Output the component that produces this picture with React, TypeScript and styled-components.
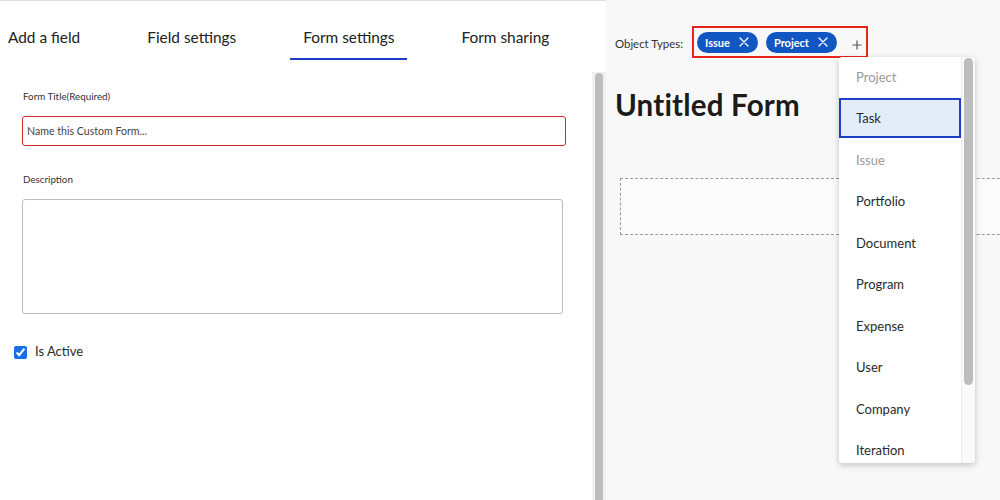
import * as React from "react";
import styled, { createGlobalStyle } from "styled-components";

const GlobalStyle = createGlobalStyle`
  html, body {
    margin: 0;
    padding: 0;
    background: #ffffff;
  }
  body {
    font-family: Lato, "Open Sans", Arial, sans-serif;
    color: #2a2a2a;
  }
  * {
    box-sizing: border-box;
  }
`;

const TABS = ["Add a field", "Field settings", "Form settings", "Form sharing"];

const OBJECT_TYPES = [
  { label: "Project", disabled: true },
  { label: "Task", selected: true },
  { label: "Issue", disabled: true },
  { label: "Portfolio" },
  { label: "Document" },
  { label: "Program" },
  { label: "Expense" },
  { label: "User" },
  { label: "Company" },
  { label: "Iteration" },
];

const CloseIcon = () => (
  <svg width="10" height="10" viewBox="0 0 10 10">
    <path
      d="M1 1 L9 9 M9 1 L1 9"
      stroke="#ffffff"
      strokeWidth="1.3"
      strokeLinecap="round"
    />
  </svg>
);

const PlusIcon = () => (
  <svg width="10" height="10" viewBox="0 0 10 10">
    <path d="M5 0.5 V9.5 M0.5 5 H9.5" stroke="#555" strokeWidth="1.2" />
  </svg>
);

export default function App() {
  return (
    <>
      <GlobalStyle />
      <Page>
        <LeftPanel>
          <TabBar>
            {TABS.map((t) => (
              <Tab key={t} active={t === "Form settings"}>
                {t}
              </Tab>
            ))}
          </TabBar>
          <Scroller>
            <FormBody>
              <Label>Form Title(Required)</Label>
              <TitleInput placeholder="Name this Custom Form..." />
              <Label spaced>Description</Label>
              <Description />
              <CheckRow>
                <Check type="checkbox" defaultChecked />
                <CheckText>Is Active</CheckText>
              </CheckRow>
            </FormBody>
            <PageTrack>
              <PageThumb />
            </PageTrack>
          </Scroller>
        </LeftPanel>

        <RightPanel>
          <TypesRow>
            <TypesLabel>Object Types:</TypesLabel>
            <Highlight>
              <Chip>
                Issue
                <CloseIcon />
              </Chip>
              <Chip>
                Project
                <CloseIcon />
              </Chip>
              <AddButton>
                <PlusIcon />
              </AddButton>
            </Highlight>
          </TypesRow>
          <FormTitle>Untitled Form</FormTitle>
          <DropZone />

          <Dropdown>
            <OptionList>
              {OBJECT_TYPES.map((o) => (
                <Option
                  key={o.label}
                  disabled={!!o.disabled}
                  selected={!!o.selected}
                >
                  {o.label}
                </Option>
              ))}
            </OptionList>
            <MenuTrack>
              <MenuThumb />
            </MenuTrack>
          </Dropdown>
        </RightPanel>
      </Page>
    </>
  );
}

const Page = styled.div`
  display: flex;
  width: 1000px;
  height: 500px;
  overflow: hidden;
`;

const LeftPanel = styled.div`
  width: 606px;
  flex-shrink: 0;
  display: flex;
  flex-direction: column;
  border-top: 1px solid #dcdcdc;
  background: #ffffff;
`;

const TabBar = styled.div`
  height: 71px;
  flex-shrink: 0;
  display: flex;
  align-items: center;
  gap: 67px;
  padding: 0 0 0 8px;
`;

const Tab = styled.div<{ active?: boolean }>`
  position: relative;
  font-size: 15.4px;
  color: #222;
  white-space: nowrap;
  cursor: pointer;

  &::after {
    content: "";
    display: ${(p) => (p.active ? "block" : "none")};
    position: absolute;
    left: -13px;
    right: -12px;
    top: 30px;
    height: 2px;
    background: #1f3ec6;
  }
`;

const Scroller = styled.div`
  flex: 1;
  min-height: 0;
  display: flex;
`;

const FormBody = styled.div`
  flex: 1;
  padding: 18px 0 0 22px;
  display: flex;
  flex-direction: column;
  align-items: flex-start;
`;

const PageTrack = styled.div`
  width: 14px;
  flex-shrink: 0;
  background: #f1f1f1;
  padding: 1px 3px 0 3px;
`;

const PageThumb = styled.div`
  height: 100%;
  background: #bdbdbd;
  border-radius: 4px 4px 0 0;
`;

const Label = styled.div<{ spaced?: boolean }>`
  font-size: 9.8px;
  line-height: 13px;
  color: #333;
  padding-left: 1px;
  margin-top: ${(p) => (p.spaced ? 27 : 0)}px;
`;

const TitleInput = styled.input`
  margin-top: 13px;
  width: 544px;
  height: 30px;
  border: 1px solid #d4262d;
  border-radius: 3px;
  padding: 0 4px;
  font-family: inherit;
  font-size: 10.6px;
  color: #333;
  outline: none;

  &::placeholder {
    color: #444;
  }
`;

const Description = styled.textarea`
  margin-top: 13px;
  width: 541px;
  height: 115px;
  border: 1px solid #bcbcbc;
  border-radius: 3px;
  resize: none;
  font-family: inherit;
  outline: none;
`;

const CheckRow = styled.label`
  display: flex;
  align-items: center;
  gap: 8px;
  margin: 29px 0 0 -8px;
`;

const Check = styled.input`
  width: 13px;
  height: 13px;
  margin: 2px 0 0 0;
  accent-color: #1a6fe8;
`;

const CheckText = styled.span`
  font-size: 13px;
  color: #2a2a2a;
`;

const RightPanel = styled.div`
  position: relative;
  flex: 1;
  min-width: 0;
  background: #f8f8f8;
  overflow: hidden;
  padding: 0 0 0 9px;
`;

const TypesRow = styled.div`
  display: flex;
  align-items: center;
  gap: 9px;
  padding-top: 26px;
`;

const TypesLabel = styled.span`
  font-size: 11.4px;
  color: #333;
  margin-top: 2px;
`;

const Highlight = styled.div`
  display: flex;
  align-items: center;
  gap: 8px;
  height: 32px;
  padding: 0 0 0 3px;
  width: 176px;
  border: 2px solid #e8251d;
`;

const Chip = styled.span`
  display: inline-flex;
  align-items: center;
  gap: 9px;
  height: 21px;
  padding: 0 9px 0 8px;
  border-radius: 11px;
  background: #1157c4;
  color: #fff;
  font-size: 11px;
  font-weight: 700;
`;

const AddButton = styled.span`
  display: inline-flex;
  margin: 5px 0 0 7px;
`;

const FormTitle = styled.h1`
  margin: 30px 0 0 0;
  font-size: 29.5px;
  line-height: 34px;
  letter-spacing: 0.2px;
  font-weight: 700;
  color: #1b1b1b;
`;

const DropZone = styled.div`
  margin: 56px 0 0 5px;
  width: 420px;
  height: 57px;
  border: 1px dashed #9a9a9a;
  background: #fbfbfb;
`;

const Dropdown = styled.div`
  position: absolute;
  left: 233px;
  top: 57px;
  width: 136px;
  height: 406px;
  display: flex;
  background: #fff;
  border-radius: 3px;
  box-shadow: 0 2px 6px rgba(0, 0, 0, 0.22);
  overflow: hidden;
`;

const OptionList = styled.div`
  flex: 1;
  min-width: 0;
  overflow: hidden;
  margin-top: -1px;
`;

const Option = styled.div<{ disabled: boolean; selected: boolean }>`
  height: ${(p) => (p.selected ? 40 : 41.5)}px;
  margin-bottom: ${(p) => (p.selected ? 1.5 : 0)}px;
  display: flex;
  align-items: center;
  padding-left: ${(p) => (p.selected ? 15 : 17)}px;
  font-size: 13px;
  white-space: nowrap;
  color: ${(p) => (p.disabled ? "#9a9a9a" : "#2a2a2a")};
  background: ${(p) => (p.selected ? "#e2edf9" : "transparent")};
  border: ${(p) => (p.selected ? "2px solid #1e3fc1" : "none")};
`;

const MenuTrack = styled.div`
  width: 14px;
  flex-shrink: 0;
  background: #fafafa;
  border-left: 1px solid #ececec;
  padding: 1px 2px 0 2px;
`;

const MenuThumb = styled.div`
  height: 327px;
  background: #bdbdbd;
  border-radius: 5px;
`;
